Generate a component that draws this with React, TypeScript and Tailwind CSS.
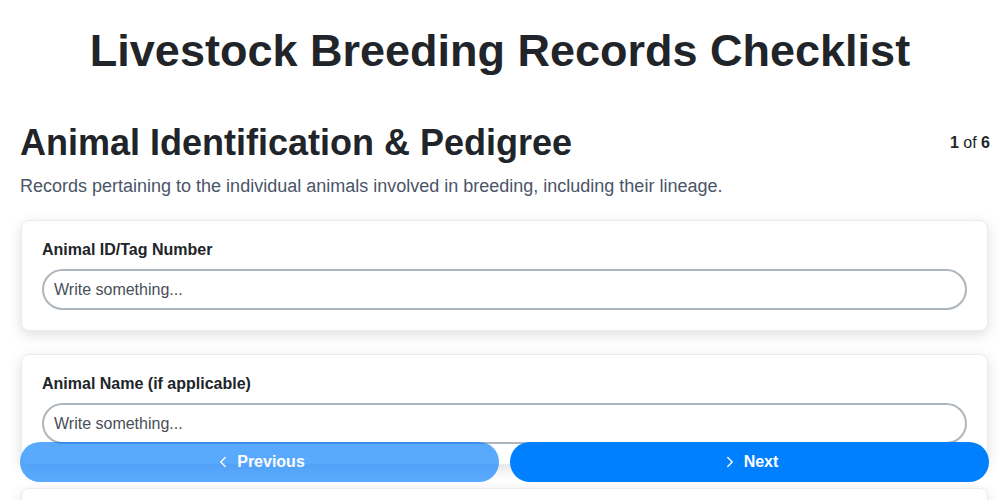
import { ChevronLeft, ChevronRight } from "lucide-react";

const fields = [
  "Animal ID/Tag Number",
  "Animal Name (if applicable)",
  "Breed",
  "Date of Birth",
  "Sire ID/Tag Number",
  "Dam ID/Tag Number",
];

export default function App() {
  return (
    <div className="min-h-screen bg-white font-['Liberation_Sans',Arial,sans-serif] text-[#212529] pt-[24px] pb-[80px]">
      {/* Page title */}
      <h1 className="text-center text-[45px] leading-[54px] font-bold">
        Livestock Breeding Records Checklist
      </h1>

      <div className="pl-5 pr-[10px]">
        {/* Section header */}
        <div className="mt-[43px] flex items-center justify-between">
          <h2 className="text-[36px] leading-[43px] font-bold">
            Animal Identification &amp; Pedigree
          </h2>
          <div className="text-base">
            <span className="font-bold">1</span> of{" "}
            <span className="font-bold">6</span>
          </div>
        </div>
        <p className="mt-[9px] text-[18px] leading-[27px] text-[#4a5568]">
          Records pertaining to the individual animals involved in breeding,
          including their lineage.
        </p>

        {/* Field cards */}
        <div className="mt-[20px] ml-px mr-[2px] flex flex-col gap-[23px]">
          {fields.map((label) => (
            <div
              key={label}
              className="bg-white border border-[#e9ecef] rounded-lg p-5 shadow-[0_4px_14px_rgba(0,0,0,0.13)]"
            >
              <label className="block text-base leading-[18px] font-bold mb-[10px]">
                {label}
              </label>
              <input
                type="text"
                placeholder="Write something..."
                className="w-full h-[41px] rounded-full border-2 border-[#adb5bd] px-[10px] text-base text-[#212529] placeholder:text-[#495057] outline-none"
              />
            </div>
          ))}
        </div>
      </div>

      {/* Navigation */}
      <div className="fixed bottom-[18px] left-5 right-[11px] flex gap-[11px]">
        <button
          disabled
          className="flex-1 h-[40px] rounded-full bg-[#007bff] opacity-65 text-white font-bold text-base flex items-center justify-center gap-[5px]"
        >
          <ChevronLeft className="w-[18px] h-[18px]" strokeWidth={1.8} />
          Previous
        </button>
        <button className="flex-1 h-[40px] rounded-full bg-[#0080ff] text-white font-bold text-base flex items-center justify-center gap-[5px]">
          <ChevronRight className="w-[18px] h-[18px]" strokeWidth={1.8} />
          Next
        </button>
      </div>
    </div>
  );
}
